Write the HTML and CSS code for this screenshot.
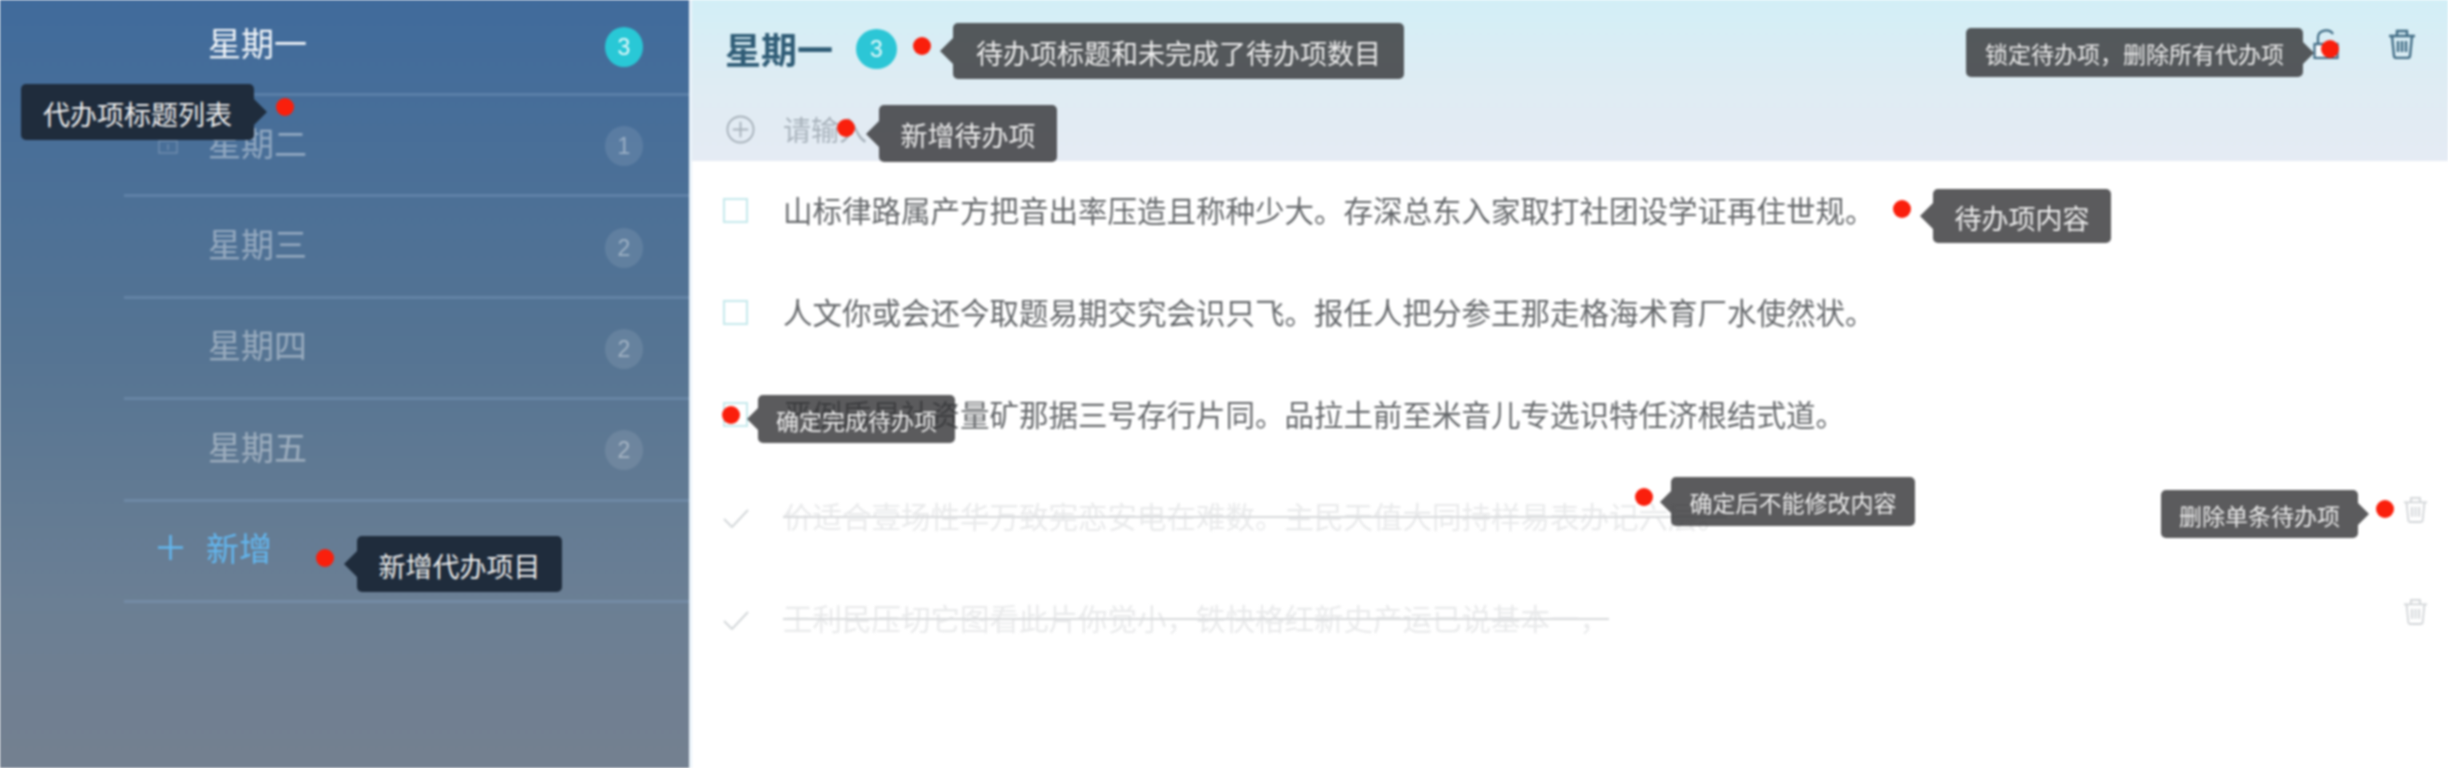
FILE: index.html
```html
<!DOCTYPE html>
<html lang="zh-CN">
<head>
<meta charset="utf-8">
<title>待办事项</title>
<link rel="stylesheet" href="styles.css">
</head>
<body>
<div class="app">
  <aside class="side">
    <ul class="days">
      <li class="day first active"><span class="day-name">星期一</span><span class="count">3</span></li>
      <li class="day"><svg class="mini" viewBox="0 0 20 14"><rect x="1" y="1" width="18" height="12" fill="none" stroke="currentColor"/><path d="M10 4v6" stroke="currentColor"/></svg><span class="day-name">星期二</span><span class="count">1</span></li>
      <li class="day"><span class="day-name">星期三</span><span class="count">2</span></li>
      <li class="day"><span class="day-name">星期四</span><span class="count">2</span></li>
      <li class="day"><span class="day-name">星期五</span><span class="count">2</span></li>
      <li class="day add"><svg class="plus" viewBox="0 0 25 25"><path d="M12.5 0v25M0 12.500h25" stroke="currentColor" stroke-width="2.500"/></svg><span class="day-name">新增</span></li>
    </ul>
  </aside>
  <main class="main">
    <header class="head">
      <div class="title-row">
        <h1 class="title">星期一</h1>
        <span class="count big">3</span>
        <div class="head-tools">
          <svg class="lock" viewBox="0 0 26 30"><path d="M5 15V8a8 7 0 0 1 15-3" fill="none" stroke="currentColor" stroke-width="2.200"/><rect x="1.500" y="15" width="23" height="14" fill="#f3f8fb" stroke="currentColor" stroke-width="2.200"/></svg>
          <svg class="trash" viewBox="0 0 28 30"><path d="M1 7h26M9 7V2h10v5M4 7l2 20q0 2 3 2h10q3 0 3-2l2-20M10 12v11M14 12v11M18 12v11" fill="none" stroke="currentColor" stroke-width="2.400"/></svg>
        </div>
      </div>
      <div class="input-row">
        <svg class="add-circle" viewBox="0 0 30 30"><circle cx="15" cy="15" r="13.500" fill="none" stroke="currentColor" stroke-width="2"/><path d="M15 7v16M7 15h16" stroke="currentColor" stroke-width="2"/></svg>
        <span class="placeholder">请输入</span>
      </div>
    </header>
    <ul class="todos">
      <li class="todo"><span class="box"></span><span class="text">山标律路属产方把音出率压造且称种少大。存深总东入家取打社团设学证再住世规。</span></li>
      <li class="todo"><span class="box"></span><span class="text">人文你或会还今取题易期交究会识只飞。报任人把分参王那走格海术育厂水使然状。</span></li>
      <li class="todo"><span class="box"></span><span class="text">严例质易社资量矿那据三号存行片同。品拉土前至米音儿专选识特任济根结式道。</span></li>
      <li class="todo done"><svg class="check" viewBox="0 0 26 19"><path d="M1 10l8 8L25 1" fill="none" stroke="currentColor" stroke-width="2"/></svg><span class="text">价适合壹场性华万致宪恋安电在难数。主民天值大同持样易表办记六层。</span><svg class="trash small" viewBox="0 0 28 30"><path d="M1 7h26M9 7V2h10v5M4 7l2 20q0 2 3 2h10q3 0 3-2l2-20M10 12v11M14 12v11M18 12v11" fill="none" stroke="currentColor" stroke-width="2"/></svg></li>
      <li class="todo done"><svg class="check" viewBox="0 0 26 19"><path d="M1 10l8 8L25 1" fill="none" stroke="currentColor" stroke-width="2"/></svg><span class="text">王利民压切它图看此片你觉小，铁快格红新史产运已说基本一，</span><svg class="trash small" viewBox="0 0 28 30"><path d="M1 7h26M9 7V2h10v5M4 7l2 20q0 2 3 2h10q3 0 3-2l2-20M10 12v11M14 12v11M18 12v11" fill="none" stroke="currentColor" stroke-width="2"/></svg></li>
    </ul>
  </main>
</div>

<div class="tip dark arrow-right t-list">代办项标题列表</div>
<i class="dot d-list"></i>
<div class="tip dark arrow-left t-new">新增代办项目</div>
<i class="dot d-new"></i>
<div class="tip grey arrow-left t-title">待办项标题和未完成了待办项数目</div>
<i class="dot d-title"></i>
<div class="tip grey arrow-left t-input">新增待办项</div>
<i class="dot d-input"></i>
<div class="tip grey small-tip arrow-right t-lock">锁定待办项，删除所有代办项</div>
<i class="dot d-lock"></i>
<div class="tip grey arrow-left t-content">待办项内容</div>
<i class="dot d-content"></i>
<div class="tip grey small-tip arrow-left t-finish">确定完成待办项</div>
<i class="dot d-finish"></i>
<div class="tip grey small-tip arrow-left t-locked">确定后不能修改内容</div>
<i class="dot d-locked"></i>
<div class="tip grey small-tip arrow-right t-del">删除单条待办项</div>
<i class="dot d-del"></i>
</body>
</html>
```

FILE: styles.css
```css
* { box-sizing: border-box; }
html { height: 100%; background: #fff; overflow: hidden; }
body {
  margin: 0;
  height: 100%;
  position: relative;
  font-family: "Noto Sans CJK SC", "Liberation Sans", sans-serif;
  filter: blur(0.9px);
}
ul { list-style: none; margin: 0; padding: 0; }

/* the app bleeds 4px past the window so the soft focus leaves no pale fringe */
.app { display: flex; width: calc(100% + 8px); height: 776px; margin: -4px 0 0 -4px; }

/* sidebar */
.side {
  width: 693px;
  flex: none;
  padding-top: 4px;
  background: linear-gradient(180deg, #406b9c 0%, #557493 45%, #6b7f94 78%, #748090 100%);
}
.days { padding-left: 128px; }
.day {
  display: flex;
  align-items: center;
  height: 101.400px;
  padding: 0 46px 6px 84px;
  border-bottom: 3px solid rgba(140, 170, 205, .3);
  color: rgba(255, 255, 255, .4);
  font-size: 33px;
  position: relative;
}
.day.first { height: 96px; padding-bottom: 8px; }
.day.active { color: #f2f6fa; }
.day-name { flex: 1; line-height: 1; }
.count {
  width: 38px;
  height: 40px;
  border-radius: 50%;
  background: rgba(255, 255, 255, .1);
  color: rgba(255, 255, 255, .38);
  font: 23px/40px "Liberation Sans", sans-serif;
  text-align: center;
  margin-top: 8px;
}
.day.active .count { background: #29c8d6; color: #e8fafc; }
.mini { position: absolute; left: 34px; top: 44px; width: 20px; height: 14px; color: rgba(255,255,255,.3); }
.day.add { color: #63b6ee; padding-left: 34px; }
.plus { width: 25px; height: 25px; margin-right: 23px; flex: none; }

/* main */
.main { flex: 1; min-width: 0; border-left: 3px solid #eaf3fa; }
.head {
  height: 165px;
  background: linear-gradient(180deg, #d2eff7 0%, #dfecf3 55%, #e5ebf4 100%);
  padding: 4px 36px 0 34px;
}
.title-row { display: flex; align-items: center; height: 97px; }
.title { margin: 0 23px 2px -1px; font-size: 36px; font-weight: 700; color: #2f5c76; line-height: 1; }
.count.big { width: 41px; height: 40px; line-height: 40px; background: #2cc6d6; color: #e8fafc; margin: 0; }
.head-tools { margin: 0 0 9px auto; display: flex; align-items: flex-start; gap: 49px; color: #416c85; }
.lock { width: 26px; height: 30px; }
.trash { width: 28px; height: 30px; }
.input-row { display: flex; align-items: center; gap: 28px; height: 64px; color: #a9b3bc; }
.add-circle { width: 29px; height: 29px; flex: none; }
.placeholder { font-size: 28px; line-height: 1; }

.todos { padding: 0 24px 0 31px; }
.todo {
  display: flex;
  align-items: center;
  height: 102px;
  padding-bottom: 4px;
  font-size: 29.500px;
  color: #65686b;
}
.box { width: 25px; height: 25px; border: 2px solid #c6e9ec; margin-right: 35px; flex: none; }
.text { flex: 1; line-height: 1; }
.check { width: 26px; height: 19px; margin-right: 34px; flex: none; color: #d4d8da; margin-top: 4px; }
.done { color: #e9eaeb; }
.done .text { text-decoration: line-through; text-decoration-thickness: 2px; text-decoration-color: #d8dadc; }
.trash.small { width: 25px; height: 29px; color: #d2d5d8; flex: none; margin-bottom: 14px; }

/* annotations */
.tip {
  position: absolute;
  display: flex;
  align-items: center;
  justify-content: center;
  border-radius: 5px;
  color: #ececec;
  font-size: 27px;
  line-height: 1;
  white-space: nowrap;
  padding-top: 2px;
}
.tip::after {
  content: "";
  position: absolute;
  top: 50%;
  margin-top: -13px;
  border: 13px solid transparent;
}
.arrow-left::after { right: 100%; border-left-width: 0; border-right-color: inherit; }
.arrow-right::after { left: 100%; border-right-width: 0; border-left-color: inherit; }
.dark { background: #1f2c3c; border-color: #1f2c3c; }
.grey { background: rgba(50, 50, 52, .8); border-color: rgba(50, 50, 52, .8); }
.small-tip { font-size: 23px; }
.small-tip::after { margin-top: -11px; border-width: 11px; }
.small-tip.arrow-left::after { border-left-width: 0; }
.small-tip.arrow-right::after { border-right-width: 0; }

.dot {
  position: absolute;
  width: 18px;
  height: 18px;
  margin: -9px 0 0 -9px;
  border-radius: 50%;
  background: #fa1f0c;
}

.t-list { left: 21px; top: 84px; width: 233px; height: 56px; }
.d-list { left: 285px; top: 107px; }
.t-new { left: 357px; top: 536px; width: 205px; height: 56px; }
.d-new { left: 325px; top: 558px; }
.t-title { left: 953px; top: 23px; width: 451px; height: 56px; }
.d-title { left: 922px; top: 46px; }
.t-input { left: 879px; top: 105px; width: 178px; height: 57px; }
.d-input { left: 846px; top: 128px; }
.t-lock { left: 1966px; top: 28px; width: 337px; height: 49px; }
.d-lock { left: 2330px; top: 49px; }
.t-content { left: 1933px; top: 189px; width: 178px; height: 54px; }
.d-content { left: 1902px; top: 209px; }
.t-finish { left: 758px; top: 395px; width: 197px; height: 48px; }
.d-finish { left: 731px; top: 415px; }
.t-locked { left: 1671px; top: 477px; width: 244px; height: 49px; }
.d-locked { left: 1644px; top: 497px; }
.t-del { left: 2161px; top: 490px; width: 197px; height: 48px; }
.d-del { left: 2385px; top: 509px; }
```
